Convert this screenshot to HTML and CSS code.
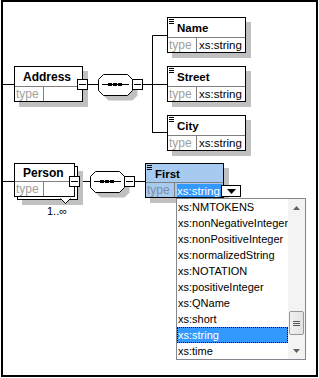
FILE: index.html
```html
<!DOCTYPE html>
<html>
<head>
<meta charset="utf-8">
<link rel="stylesheet" href="styles.css">
</head>
<body>
<div class="canvas">
  <div class="stage">
    <svg class="wires" width="319" height="378" viewBox="0 0 319 378">
      <path d="M2 84.5H14 M87 84.5H98 M143 84.5H152.5 M152.5 35.5V133 M152.5 35.5H167 M152.5 84.5H167 M152.5 132.5H167 M2 181.5H14 M79 181.5H90 M134 181.5H145" stroke="#000" fill="none"/>
    </svg>

    <svg class="seq seq-a" width="40" height="27" viewBox="0 0 40 27">
      <polygon points="10.5,5.5 34.5,5.5 39.5,10.5 39.5,21.5 34.5,26.5 10.5,26.5 5.5,21.5 5.5,10.5" fill="#c0c0c0"/>
      <polygon points="5.5,0.5 29.5,0.5 34.5,5.5 34.5,16.5 29.5,21.5 5.5,21.5 0.5,16.5 0.5,5.5" fill="#fff" stroke="#000"/>
      <path d="M4 10.5H31" stroke="#000"/>
      <rect x="10" y="9" width="4" height="3" fill="#000"/>
      <rect x="15" y="9" width="4" height="3" fill="#000"/>
      <rect x="20" y="9" width="4" height="3" fill="#000"/>
    </svg>
    <svg class="seq seq-b" width="40" height="27" viewBox="0 0 40 27">
      <polygon points="10.5,5.5 34.5,5.5 39.5,10.5 39.5,21.5 34.5,26.5 10.5,26.5 5.5,21.5 5.5,10.5" fill="#c0c0c0"/>
      <polygon points="5.5,0.5 29.5,0.5 34.5,5.5 34.5,16.5 29.5,21.5 5.5,21.5 0.5,16.5 0.5,5.5" fill="#fff" stroke="#000"/>
      <path d="M4 10.5H31" stroke="#000"/>
      <rect x="10" y="9" width="4" height="3" fill="#000"/>
      <rect x="15" y="9" width="4" height="3" fill="#000"/>
      <rect x="20" y="9" width="4" height="3" fill="#000"/>
    </svg>
    <span class="collapse collapse-seq-a"></span>
    <span class="collapse collapse-seq-b"></span>

    <div class="el el-address">
      <div class="el-name">Address</div>
      <div class="el-type"><span class="el-type-label">type</span><span class="el-type-value"></span></div>
      <span class="collapse collapse-el"></span>
    </div>

    <div class="el el-child el-name-1">
      <div class="el-name"><span class="simple-icon"></span>Name</div>
      <div class="el-type"><span class="el-type-label">type</span><span class="el-type-value">xs:string</span></div>
    </div>
    <div class="el el-child el-name-2">
      <div class="el-name"><span class="simple-icon"></span>Street</div>
      <div class="el-type"><span class="el-type-label">type</span><span class="el-type-value">xs:string</span></div>
    </div>
    <div class="el el-child el-name-3">
      <div class="el-name"><span class="simple-icon"></span>City</div>
      <div class="el-type"><span class="el-type-label">type</span><span class="el-type-value">xs:string</span></div>
    </div>

    <div class="person">
      <div class="el el-back"></div>
      <div class="el el-person">
        <div class="el-name">Person</div>
        <div class="el-type"><span class="el-type-label">type</span><span class="el-type-value"></span></div>
        <span class="collapse collapse-person"></span>
      </div>
      <svg class="notch" width="11" height="6" viewBox="0 0 11 6"><path d="M0.5 0.5L5.5 5.5L10.5 0.5" stroke="#000" fill="#fff"/></svg>
      <span class="occurs">1..∞</span>
    </div>

    <div class="el el-child el-first">
      <div class="el-name"><span class="simple-icon"></span>First</div>
      <div class="el-type"><span class="el-type-label">type</span><span class="el-type-value sel">xs:string</span></div>
      <span class="drop-btn"><svg width="9" height="5" viewBox="0 0 9 5"><path d="M0 0H9L4.5 5Z" fill="#000"/></svg></span>
    </div>

    <div class="listbox">
      <ul class="items">
        <li>xs:NMTOKENS</li>
        <li>xs:nonNegativeInteger</li>
        <li>xs:nonPositiveInteger</li>
        <li>xs:normalizedString</li>
        <li>xs:NOTATION</li>
        <li>xs:positiveInteger</li>
        <li>xs:QName</li>
        <li>xs:short</li>
        <li class="active">xs:string</li>
        <li>xs:time</li>
      </ul>
      <div class="scrollbar">
        <span class="sb-arrow"><svg width="7" height="4" viewBox="0 0 7 4"><path d="M0 4H7L3.5 0Z" fill="#606060"/></svg></span>
        <span class="sb-track">
          <span class="sb-thumb"><span class="grip"></span></span>
        </span>
        <span class="sb-arrow"><svg width="7" height="4" viewBox="0 0 7 4"><path d="M0 0H7L3.5 4Z" fill="#606060"/></svg></span>
      </div>
    </div>
  </div>
</div>
</body>
</html>
```

FILE: styles.css
```css
* { box-sizing: border-box; }
html, body { margin: 0; padding: 0; background: #fff; }
body { font-family: "Liberation Sans", Arial, sans-serif; }

.canvas {
  position: relative;
  margin-left: 1px;
  width: 317px;
  height: 377px;
  border: 2px solid #000;
}
.stage {
  position: absolute;
  left: -3px;
  top: -2px;
  width: 319px;
  height: 378px;
}
.wires { position: absolute; left: 0; top: 0; }

.seq { position: absolute; }
.seq-a { left: 98px; top: 74px; }
.seq-b { left: 90px; top: 171px; }

.collapse {
  position: absolute;
  width: 11px;
  height: 11px;
  background: #fff;
  border: 1px solid #000;
  z-index: 3;
}
.collapse::after {
  content: "";
  position: absolute;
  left: 1px;
  right: 1px;
  top: 4px;
  height: 1px;
  background: #000;
}
.collapse-seq-a { left: 132px; top: 79px; }
.collapse-seq-b { left: 124px; top: 176px; }
.collapse-el { right: -6px; top: 12px; }
.collapse-person { right: -6px; top: 12px; }

.el {
  position: absolute;
  background: #fff;
  border: 1px solid #000;
  box-shadow: 5px 5px 0 #c0c0c0;
  display: flex;
  flex-direction: column;
}
.el-name {
  height: 20px;
  display: flex;
  align-items: center;
  padding-left: 8px;
  padding-top: 1px;
  font-weight: bold;
  font-size: 12px;
  color: #000;
  border-bottom: 1px solid #808080;
  position: relative;
}
.el-type {
  flex: 1;
  display: flex;
  font-size: 12px;
  line-height: 14px;
}
.el-type-label {
  width: 29px;
  color: #a0a0a0;
  padding-left: 1px;
  border-right: 1px solid #808080;
}
.el-type-value { padding-left: 2px; color: #000; font-size: 11.5px; }

.el-address { left: 14px; top: 66px; width: 69px; height: 36px; }

.el-child { width: 79px; height: 36px; }
.el-child .el-name { font-size: 11.5px; padding-left: 9px; }
.el-child .el-type-label { width: 29px; }
.el-name-1 { left: 167px; top: 17px; }
.el-name-2 { left: 167px; top: 66px; }
.el-name-3 { left: 167px; top: 115px; }

.simple-icon {
  position: absolute;
  left: 1px;
  top: 1px;
  width: 5px;
  height: 5px;
  background:
    linear-gradient(#000 0 0) 0 0 / 5px 1px no-repeat,
    linear-gradient(#000 0 0) 0 2px / 5px 1px no-repeat,
    linear-gradient(#000 0 0) 0 4px / 5px 1px no-repeat;
}

.person { position: absolute; left: 14px; top: 163px; width: 70px; height: 55px; }
.el-back { left: 3px; top: 3px; width: 61px; height: 34px; }
.el-person { left: 0; top: 0; width: 61px; height: 34px; box-shadow: none; }
.el-person .el-name { height: 20px; }
.notch { position: absolute; left: 46px; top: 35px; }
.occurs {
  position: absolute;
  left: 33px;
  top: 42px;
  font-size: 11px;
  line-height: 13px;
  color: #000;
}

.el-first {
  left: 145px;
  top: 163px;
  height: 35px;
  background: #a6caf0;
}
.el-first .el-type-label { color: #7f8ea0; }
.el-type-value.sel {
  background: #3399ff;
  color: #fff;
  margin-left: 2px;
  padding-left: 1px;
  padding-right: 2px;
  height: 13px;
  margin-top: 1px;
}
.el-first .el-type-value { padding-left: 0; }

.drop-btn {
  position: absolute;
  left: 75px;
  top: 21px;
  width: 20px;
  height: 12px;
  background: #fff;
  border: 1px solid #000;
  display: flex;
  align-items: center;
  justify-content: center;
  z-index: 3;
}

.listbox {
  position: absolute;
  left: 176px;
  top: 198px;
  width: 130px;
  height: 162px;
  border: 1px solid #828790;
  background: #fff;
  display: flex;
  z-index: 4;
}
.items {
  list-style: none;
  margin: 0;
  padding: 0;
  flex: 1;
}
.items li {
  height: 16px;
  line-height: 16px;
  font-size: 11px;
  padding-left: 1px;
  color: #000;
  white-space: nowrap;
}
.items li.active {
  background: #3399ff;
  color: #fff;
  outline: 1px dotted #000;
  outline-offset: -1px;
}
.scrollbar {
  width: 17px;
  display: flex;
  flex-direction: column;
  background: #f3f3f3;
}
.sb-arrow {
  height: 17px;
  display: flex;
  align-items: center;
  justify-content: center;
}
.sb-track {
  flex: 1;
  display: flex;
  flex-direction: column;
  justify-content: flex-end;
  padding-bottom: 7px;
}
.sb-thumb {
  height: 24px;
  margin: 0 1px;
  border: 1px solid #979797;
  border-radius: 2px;
  background: linear-gradient(to right, #f0f0f0, #e2e2e2);
  display: flex;
  align-items: center;
  justify-content: center;
}
.grip {
  width: 7px;
  height: 5px;
  background:
    linear-gradient(#555 0 0) 0 0 / 7px 1px no-repeat,
    linear-gradient(#555 0 0) 0 2px / 7px 1px no-repeat,
    linear-gradient(#555 0 0) 0 4px / 7px 1px no-repeat;
}
```
